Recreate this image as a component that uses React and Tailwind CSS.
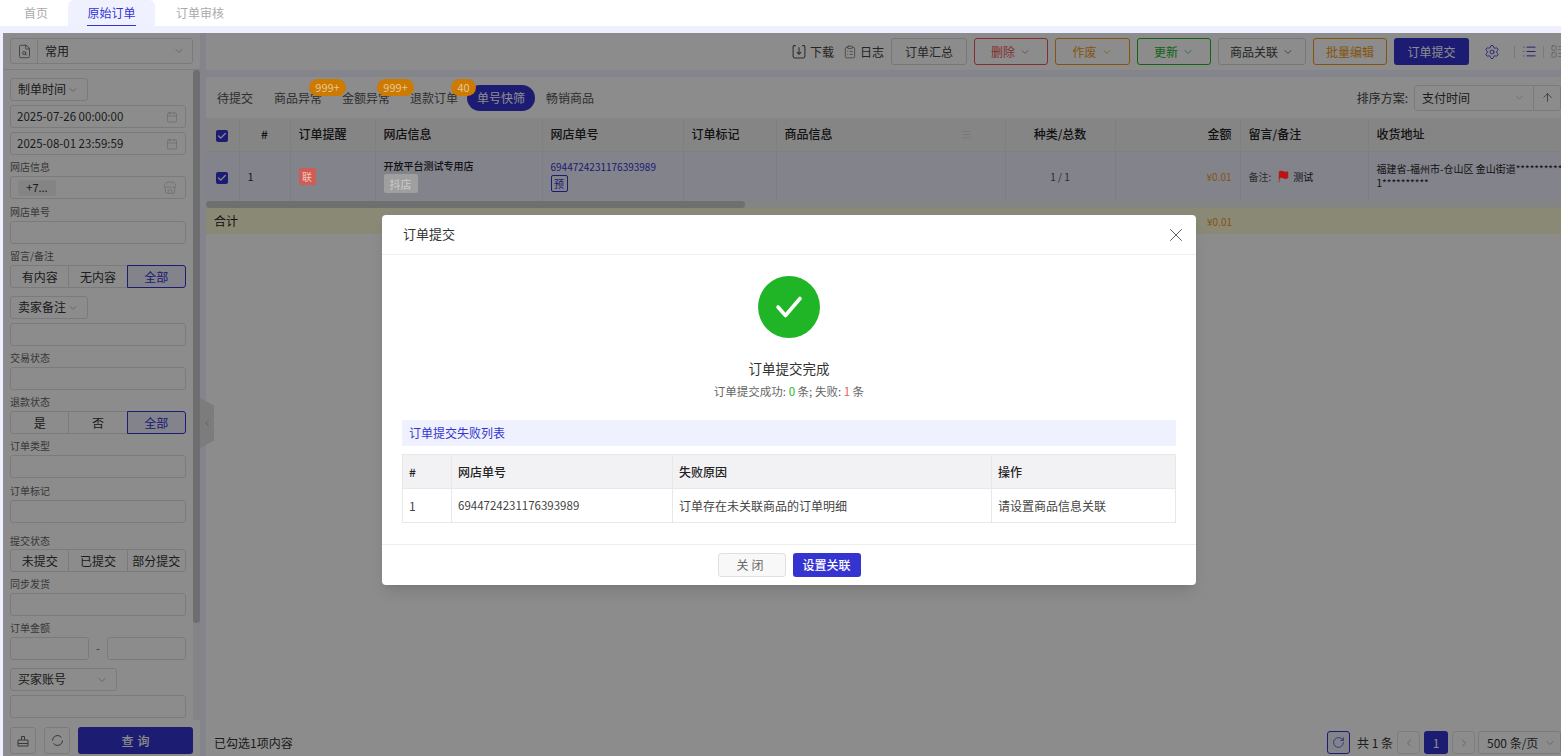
import { Calendar, ChevronDown, ChevronLeft, ChevronRight, ArrowUp, Settings, List, LayoutList, RotateCw, X, Menu, Check, Flag, Store, FileSearch, ClipboardList } from 'lucide-react';

const fontStack = { fontFamily: '"Noto Sans CJK SC", "Noto Sans", sans-serif' };

const colWidths = [33, 51, 85, 167, 141, 93, 229, 110, 125, 128, 300];

function Cols() {
  return (
    <colgroup>
      {colWidths.map((w, i) => <col key={i} style={{ width: w }} />)}
    </colgroup>
  );
}

function FieldLabel({ children, extra = 'h-[21px] pt-[5px]' }) {
  return <div className={`text-[10px] leading-[14px] text-[#666] ${extra}`}>{children}</div>;
}

function Input({ className = 'w-[176px]', children }) {
  return (
    <div className={`h-[23px] border border-[#e0e0e0] rounded-[3px] bg-white flex items-center text-[11px] text-[#333] ${className}`}>
      {children}
    </div>
  );
}

function DropLabel({ label, width }) {
  return (
    <div className={`h-[23px] border border-[#e0e0e0] rounded-[3px] flex items-center justify-between pl-[7px] pr-[8px] text-[12px] leading-[20px] text-[#333] bg-white ${width}`}>
      <span className="-mt-px">{label}</span>
      <ChevronDown size={12} className="text-[#bbb]" />
    </div>
  );
}

function Segment({ items, active }) {
  return (
    <div className="h-[23px] w-[176px] flex text-[12px] text-[#333]">
      {items.map((item, i) => (
        <div
          key={item}
          className={`flex-1 flex items-center justify-center border
            ${i === active ? 'relative border-[#3534d1] text-[#3534d1] bg-[#eeeeff]' : 'border-[#e0e0e0]'}
            ${i > 0 ? '-ml-px' : ''} ${i === 0 ? 'rounded-l-[3px]' : ''} ${i === items.length - 1 ? 'rounded-r-[3px]' : ''}`}
        >
          {item}
        </div>
      ))}
    </div>
  );
}

function DateInput({ value }) {
  return (
    <Input>
      <span className="pl-[6px] flex-1 text-[11.5px]">{value}</span>
      <Calendar size={12} strokeWidth={1.2} className="mr-[7px] text-[#bbb]" />
    </Input>
  );
}

function Sidebar() {
  return (
    <aside className="w-[197px] h-full bg-white flex flex-col shrink-0">
      <div className="h-[37px] border-b border-[#e6e6e6] pt-[5px] pl-[7px] shrink-0">
        <div className="h-[26px] w-[183px] border border-[#e0e0e0] rounded-[3px] flex items-center text-[12px] text-[#333]">
          <div className="w-[27px] h-full border-r border-[#e0e0e0] flex items-center justify-center">
            <FileSearch size={15} strokeWidth={1.2} className="text-[#555]" />
          </div>
          <span className="pl-[7px] flex-1">常用</span>
          <ChevronDown size={12} className="mr-[7px] text-[#bbb]" />
        </div>
      </div>

      <div className="flex-1 flex min-h-0">
        <div className="w-[190px] pl-[7px] pt-[8px] overflow-hidden">
          <DropLabel label="制单时间" width="w-[78px]" />
          <div className="h-[4px]" />
          <DateInput value="2025-07-26 00:00:00" />
          <div className="h-[4px]" />
          <DateInput value="2025-08-01 23:59:59" />
          <FieldLabel>网店信息</FieldLabel>
          <Input>
            <span className="ml-[7px] h-[16px] w-[38px] bg-[#f0f0f0] rounded-[2px] flex items-center justify-center text-[11px]">+7...</span>
            <span className="flex-1" />
            <Store size={14} strokeWidth={1.1} className="mr-[8px] text-[#bbb]" />
          </Input>
          <FieldLabel extra="h-[22px] pt-[6px]">网店单号</FieldLabel>
          <Input />
          <FieldLabel>留言/备注</FieldLabel>
          <Segment items={['有内容', '无内容', '全部']} active={2} />
          <div className="h-[8px]" />
          <DropLabel label="卖家备注" width="w-[78px]" />
          <div className="h-[4px]" />
          <Input />
          <FieldLabel>交易状态</FieldLabel>
          <Input />
          <FieldLabel>退款状态</FieldLabel>
          <Segment items={['是', '否', '全部']} active={2} />
          <FieldLabel>订单类型</FieldLabel>
          <Input />
          <FieldLabel extra="h-[22px] pt-[6px]">订单标记</FieldLabel>
          <Input />
          <FieldLabel extra="h-[26px] pt-[11px]">提交状态</FieldLabel>
          <Segment items={['未提交', '已提交', '部分提交']} active={-1} />
          <FieldLabel>同步发货</FieldLabel>
          <Input />
          <FieldLabel>订单金额</FieldLabel>
          <div className="flex items-center w-[176px]">
            <Input className="w-[79px]" />
            <span className="flex-1 text-center text-[11px] text-[#666]">-</span>
            <Input className="w-[79px]" />
          </div>
          <div className="h-[8px]" />
          <DropLabel label="买家账号" width="w-[107px]" />
          <div className="h-[4px]" />
          <Input />
        </div>
        {/* scrollbar */}
        <div className="w-[7px] bg-[#f0f0f0]">
          <div className="h-[553px] bg-[#c8c8cc] rounded-[4px]" />
        </div>
      </div>

      <div className="h-[36px] shrink-0 pl-[7px] pt-[7px] flex gap-[8px]">
        <div className="w-[26px] h-[27px] border border-[#e0e0e0] rounded-[3px] flex items-center justify-center">
          <svg width="12" height="12" viewBox="0 0 12 12" fill="none" stroke="#666" strokeWidth="1">
            <path d="M4.5 5V1.5h3V5M1 5h10v6H1zM1 8.5h10" />
          </svg>
        </div>
        <div className="w-[26px] h-[27px] border border-[#e0e0e0] rounded-[3px] flex items-center justify-center">
          <svg width="13" height="13" viewBox="0 0 13 13" fill="none" stroke="#666" strokeWidth="1">
            <path d="M1.5 6.5a5 5 0 0 1 9-3M11.5 6.5a5 5 0 0 1-9 3" />
          </svg>
        </div>
        <div className="w-[115px] h-[27px] bg-[#3534d1] rounded-[3px] flex items-center justify-center text-[12px] font-medium text-white tracking-[4px] pl-[4px]">查询</div>
      </div>
    </aside>
  );
}

function ToolBtn({ label, tone = 'border-[#d9d9d9] text-[#444]', width, arrow }) {
  return (
    <div className={`h-[27px] border rounded-[3px] flex items-center justify-center gap-[4px] text-[12px] ${tone} ${width}`}>
      {label}
      {arrow && <ChevronDown size={12} strokeWidth={1.4} />}
    </div>
  );
}

function Toolbar() {
  return (
    <div className="h-[37px] bg-white flex items-center justify-end shrink-0 text-[12px] text-[#444]">
      <div className="flex items-center gap-[4px] mr-[9px]">
        <svg width="14" height="15" viewBox="0 0 13 14" fill="none" stroke="#555" strokeWidth="1">
          <path d="M3.5 1.5H2a1 1 0 0 0-1 1v9a1.5 1.5 0 0 0 1.5 1.5h8a1.5 1.5 0 0 0 1.5-1.5v-9a1 1 0 0 0-1-1H9.5M6.5 3v6.5M4.5 7.5l2 2 2-2" />
        </svg>
        下载
      </div>
      <div className="flex items-center gap-[3px] mr-[7px]">
        <ClipboardList size={14} strokeWidth={1.1} className="text-[#555]" />
        日志
      </div>
      <div className="flex items-center gap-[7px]">
        <ToolBtn label="订单汇总" width="w-[76px]" />
        <ToolBtn label="删除" arrow tone="border-[#ee5555] text-[#ee5555]" width="w-[74px]" />
        <ToolBtn label="作废" arrow tone="border-[#f09a1a] text-[#f09a1a]" width="w-[75px]" />
        <ToolBtn label="更新" arrow tone="border-[#22b522] text-[#22b522]" width="w-[74px]" />
        <ToolBtn label="商品关联" arrow width="w-[88px]" />
        <ToolBtn label="批量编辑" tone="border-[#f09a1a] text-[#f09a1a]" width="w-[74px]" />
        <div className="h-[27px] w-[75px] bg-[#3534d1] rounded-[3px] flex items-center justify-center text-white">订单提交</div>
      </div>
      <Settings size={16} strokeWidth={1.3} className="ml-[15px] text-[#3534d1]" />
      <div className="ml-[14px] w-px h-[12px] bg-[#ddd]" />
      <List size={15} strokeWidth={1.5} className="ml-[7px] text-[#3534d1]" />
      <div className="ml-[6px] w-px h-[12px] bg-[#ddd]" />
      <LayoutList size={15} strokeWidth={1.2} className="ml-[6px] mr-[-4px] shrink-0 text-[#aaa]" />
    </div>
  );
}

function Badge({ label, left, width }) {
  return (
    <span className={`absolute top-[-10px] z-50 h-[17px] rounded-[9px] bg-[#cc7a00] text-[#e6c79a] text-[11px] leading-[17px] text-center ${left} ${width}`}>
      {label}
    </span>
  );
}

function FilterTabs() {
  return (
    <div className="h-[41px] bg-white flex items-center shrink-0 text-[12px] text-[#555] pl-[11px]">
      <span>待提交</span>
      <span className="relative ml-[21px]">商品异常<Badge label="999+" left="left-[35px]" width="w-[37px]" /></span>
      <span className="relative ml-[20px]">金额异常<Badge label="999+" left="left-[35px]" width="w-[37px]" /></span>
      <span className="relative ml-[20px]">退款订单<Badge label="40" left="left-[41px]" width="w-[25px]" /></span>
      <span className="ml-[9px] h-[26px] w-[68px] rounded-[13px] bg-[#3534d1] text-white flex items-center justify-center">单号快筛</span>
      <span className="ml-[11px]">畅销商品</span>
      <div className="ml-auto flex items-center">
        <span className="mr-[6px] text-[#444]">排序方案:</span>
        <div className="h-[26px] w-[120px] border border-[#e0e0e0] rounded-l-[3px] flex items-center justify-between pl-[7px] pr-[7px] text-[#333]">
          支付时间
          <ChevronDown size={13} strokeWidth={1.2} className="text-[#bbb]" />
        </div>
        <div className="h-[26px] w-[28px] -ml-px border border-[#e0e0e0] rounded-r-[3px] flex items-center justify-center">
          <ArrowUp size={13} strokeWidth={1.3} className="text-[#444]" />
        </div>
      </div>
    </div>
  );
}

function TickBox() {
  return (
    <span className="w-[12px] h-[12px] bg-[#3534d1] rounded-[2px] inline-flex items-center justify-center align-middle">
      <Check size={10} strokeWidth={3} className="text-white" />
    </span>
  );
}

function OrderTable() {
  const th = 'border-r border-[#e8e8e8] font-medium text-[12px] text-[#222]';
  const td = 'border-r border-[#e4e4f2] align-middle';
  return (
    <div className="shrink-0 overflow-hidden">
      <table className="table-fixed border-collapse w-[1462px]">
        <Cols />
        <thead>
          <tr className="h-[33px] bg-[#f2f2f2] border-b border-[#e8e8e8]">
            <th className={`${th} text-center`}><TickBox /></th>
            <th className={`${th} text-center`}>#</th>
            <th className={`${th} text-left px-[8px]`}>订单提醒</th>
            <th className={`${th} text-left px-[8px]`}>网店信息</th>
            <th className={`${th} text-left px-[8px]`}>网店单号</th>
            <th className={`${th} text-left px-[8px]`}>订单标记</th>
            <th className={`${th} text-left px-[8px]`}>
              <div className="flex items-center justify-between">
                商品信息
                <Menu size={11} strokeWidth={1.2} className="text-[#ccc] mr-[25px]" />
              </div>
            </th>
            <th className={`${th} text-center`}>种类/总数</th>
            <th className={`${th} text-right px-[8px]`}>金额</th>
            <th className={`${th} text-left px-[8px]`}>留言/备注</th>
            <th className={`${th} text-left px-[8px]`}>收货地址</th>
          </tr>
        </thead>
        <tbody>
          <tr className="h-[50px] bg-[#eeeeff] text-[10px] text-[#333]">
            <td className={`${td} text-center`}><TickBox /></td>
            <td className={`${td} px-[8px] text-[11px]`}>1</td>
            <td className={`${td} px-[8px]`}>
              <span className="relative z-50 w-[17px] h-[17px] rounded-[2px] bg-[#cf5d55] text-[#f0c8c0] flex items-center justify-center text-[10px]">联</span>
            </td>
            <td className={`${td} px-[8px]`}>
              <div className="leading-[14px] font-medium text-[#222]">开放平台测试专用店</div>
              <span className="relative z-50 mt-[1px] w-[34px] h-[19px] rounded-[2px] bg-[#9f9f9f] text-[#c4c4c4] flex items-center justify-center text-[11px] font-medium">抖店</span>
            </td>
            <td className={`${td} px-[8px]`}>
              <div className="text-[#3534d1] text-[10px] leading-[14px]">6944724231176393989</div>
              <span className="mt-[1px] w-[17px] h-[17px] border border-[#3534d1] rounded-[2px] text-[#3534d1] flex items-center justify-center text-[10px]">预</span>
            </td>
            <td className={td} />
            <td className={td} />
            <td className={`${td} text-center text-[#555]`}>1 / 1</td>
            <td className={`${td} px-[8px] text-right text-[#f09a1a]`}>¥0.01</td>
            <td className={`${td} px-[8px]`}>
              <span className="flex items-center text-[#555]">
                备注:
                <Flag size={13} strokeWidth={1} fill="#c01010" className="relative z-50 ml-[6px] text-[#a01010]" />
                <span className="ml-[3px] text-[#222]">测试</span>
              </span>
            </td>
            <td className={`${td} px-[8px]`}>
              <div className="leading-[14px] whitespace-nowrap text-[#222]">福建省-福州市-仓山区 金山街道**********************</div>
              <div className="leading-[14px] text-[#222]">1**********</div>
            </td>
          </tr>
        </tbody>
      </table>
      <div className="h-[7px] bg-[#f0f0f0]">
        <div className="h-[7px] w-[539px] bg-[#c8cccc] rounded-[4px]" />
      </div>
      <table className="table-fixed border-collapse w-[1462px]">
        <Cols />
        <tbody>
          <tr className="h-[26px] bg-[#fcf9d6] text-[12px] text-[#222]">
            <td colSpan={2} className="pl-[8px]">合计</td>
            <td colSpan={6} />
            <td className="text-right pr-[8px] text-[10px] text-[#f09a1a]">¥0.01</td>
            <td colSpan={2} />
          </tr>
        </tbody>
      </table>
    </div>
  );
}

function Pager() {
  return (
    <div className="h-[36px] shrink-0 flex items-center justify-between pl-[8px] pt-[9px] text-[12px] text-[#333]">
      <span>已勾选1项内容</span>
      <div className="flex items-center">
        <div className="w-[23px] h-[23px] border border-[#3534d1] rounded-[3px] bg-[#eeeeff] flex items-center justify-center">
          <RotateCw size={13} strokeWidth={1.3} className="text-[#3534d1]" />
        </div>
        <span className="ml-[7px] w-[36px] whitespace-nowrap">共 1 条</span>
        <div className="ml-[4px] w-[23px] h-[23px] border border-[#e6e6e6] rounded-[3px] flex items-center justify-center">
          <ChevronLeft size={12} className="text-[#bbb]" />
        </div>
        <div className="ml-[4px] w-[24px] h-[23px] bg-[#3534d1] rounded-[3px] text-white flex items-center justify-center">1</div>
        <div className="ml-[4px] w-[23px] h-[23px] border border-[#e6e6e6] rounded-[3px] flex items-center justify-center">
          <ChevronRight size={12} className="text-[#bbb]" />
        </div>
        <div className="ml-[3px] w-[83px] h-[23px] border border-[#e0e0e0] rounded-[3px] flex items-center justify-between pl-[8px] pr-[4px]">
          500 条/页
          <ChevronDown size={12} className="text-[#bbb]" />
        </div>
      </div>
    </div>
  );
}

function SubmitModal() {
  const cell = 'border border-[#e8e8e8] px-[6px] text-left';
  return (
    <div className="w-[814px] h-[370px] ml-[379px] mt-[182px] bg-white rounded-[4px] flex flex-col shadow-lg text-[#333]">
      <div className="h-[40px] shrink-0 border-b border-[#eee] flex items-center justify-between pl-[21px] pr-[9px] text-[13px]">
        <span className="-mt-px">订单提交</span>
        <X size={22} strokeWidth={1} className="text-[#555]" />
      </div>
      <div className="flex-1 flex flex-col items-center pt-[21px] px-[20px]">
        <div className="w-[62px] h-[62px] rounded-full bg-[#20b526] flex items-center justify-center shrink-0">
          <svg width="30" height="24" viewBox="0 0 30 24" fill="none" stroke="white" strokeWidth="3.6" strokeLinecap="round" strokeLinejoin="round">
            <path d="M4 12l7.5 8.5L26 3.5" />
          </svg>
        </div>
        <div className="mt-[21px] text-[13.5px] leading-[18px]">订单提交完成</div>
        <div className="mt-[6px] text-[11.5px] leading-[16px] text-[#666]">
          订单提交成功: <span className="text-[#20b526]">0</span> 条; 失败: <span className="text-[#f05a5a]">1</span> 条
        </div>
        <div className="mt-[21px] w-full h-[26px] bg-[#eff1ff] text-[#3534d1] text-[12px] leading-[25px] pl-[7px]">订单提交失败列表</div>
        <table className="mt-[8px] w-full table-fixed border-collapse text-[12px]">
          <colgroup>
            <col className="w-[49px]" />
            <col className="w-[221px]" />
            <col className="w-[319px]" />
            <col />
          </colgroup>
          <thead>
            <tr className="h-[34px] bg-[#f2f2f4]">
              <th className={`${cell} font-medium text-[#222]`}>#</th>
              <th className={`${cell} font-medium text-[#222]`}>网店单号</th>
              <th className={`${cell} font-medium text-[#222]`}>失败原因</th>
              <th className={`${cell} font-medium text-[#222]`}>操作</th>
            </tr>
          </thead>
          <tbody>
            <tr className="h-[34px] text-[#444]">
              <td className={cell}>1</td>
              <td className={`${cell} text-[11.5px]`}>6944724231176393989</td>
              <td className={cell}>订单存在未关联商品的订单明细</td>
              <td className={cell}>请设置商品信息关联</td>
            </tr>
          </tbody>
        </table>
      </div>
      <div className="h-[41px] shrink-0 border-t border-[#eee] flex items-center justify-center gap-[7px] text-[12px]">
        <div className="w-[68px] h-[24px] border border-[#e0e0e0] rounded-[3px] bg-[#f8f8f8] text-[#666] flex items-center justify-center tracking-[3px]">关闭</div>
        <div className="w-[68px] h-[24px] rounded-[3px] bg-[#3534d1] text-white flex items-center justify-center font-medium">设置关联</div>
      </div>
    </div>
  );
}

export default function App() {
  return (
    <div className="w-[1561px] h-[756px] overflow-hidden bg-[#eff0ff] flex flex-col" style={fontStack}>
      <nav className="h-[26px] bg-white flex text-[12px] text-[#aaa] shrink-0">
        <div className="w-[68px] flex items-center pl-[24px]">首页</div>
        <div className="w-[87px] bg-[#f0f1ff] rounded-t-[6px] flex items-center justify-center text-[#3534d1]">
          <span className="h-[26px] leading-[25px] border-b border-[#3534d1]">原始订单</span>
        </div>
        <div className="flex items-center pl-[21px]">订单审核</div>
      </nav>
      <div className="h-[7px] shrink-0" />
      <div className="relative flex-1 min-h-0 ml-[3px] flex">
        <Sidebar />
        <div className="w-[6px] shrink-0 relative">
          <div className="absolute left-0 top-[365px] w-[14px] h-[50px] bg-[#e2e2e2] flex items-center justify-center [clip-path:polygon(0_0,100%_15%,100%_85%,0_100%)]">
            <ChevronLeft size={10} className="text-[#aaa]" />
          </div>
        </div>
        <main className="flex-1 min-w-0 flex flex-col">
          <Toolbar />
          <div className="h-[7px] shrink-0" />
          <FilterTabs />
          <OrderTable />
          <div className="flex-1 bg-white flex flex-col justify-end">
            <Pager />
          </div>
        </main>
        <div className="absolute inset-0 z-40 bg-black/45">
          <SubmitModal />
        </div>
      </div>
    </div>
  );
}
